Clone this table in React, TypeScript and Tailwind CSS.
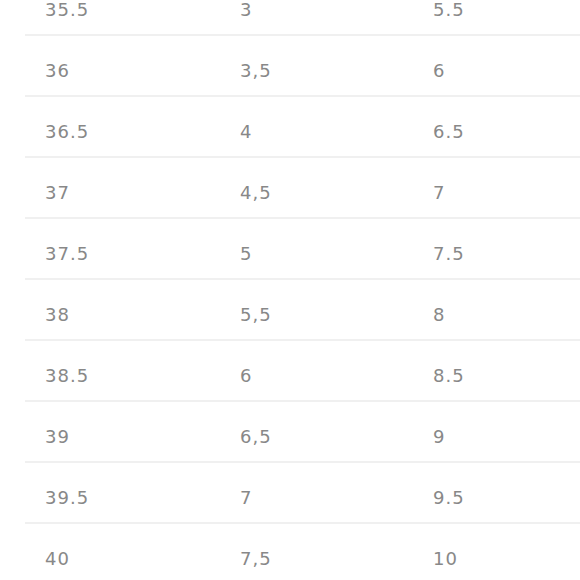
const rows: [string, string, string][] = [
  ["35.5", "3", "5.5"],
  ["36", "3,5", "6"],
  ["36.5", "4", "6.5"],
  ["37", "4,5", "7"],
  ["37.5", "5", "7.5"],
  ["38", "5,5", "8"],
  ["38.5", "6", "8.5"],
  ["39", "6,5", "9"],
  ["39.5", "7", "9.5"],
  ["40", "7,5", "10"],
];

export default function App() {
  return (
    <div className="h-[580px] w-[580px] overflow-hidden bg-white">
      <div className="-mt-[25px] ml-[25px] font-['DejaVu_Sans',sans-serif] text-[18px] leading-[18px] tracking-[1px] text-[#888888]">
        {rows.map((r, i) => (
          <div
            key={i}
            className="grid h-[61px] grid-cols-[195px_193px_1fr] border-b-2 border-[#f0f0f0] pt-[26px]"
          >
            <div className="pl-5">{r[0]}</div>
            <div className="pl-5">{r[1]}</div>
            <div className="pl-5">{r[2]}</div>
          </div>
        ))}
      </div>
    </div>
  );
}
